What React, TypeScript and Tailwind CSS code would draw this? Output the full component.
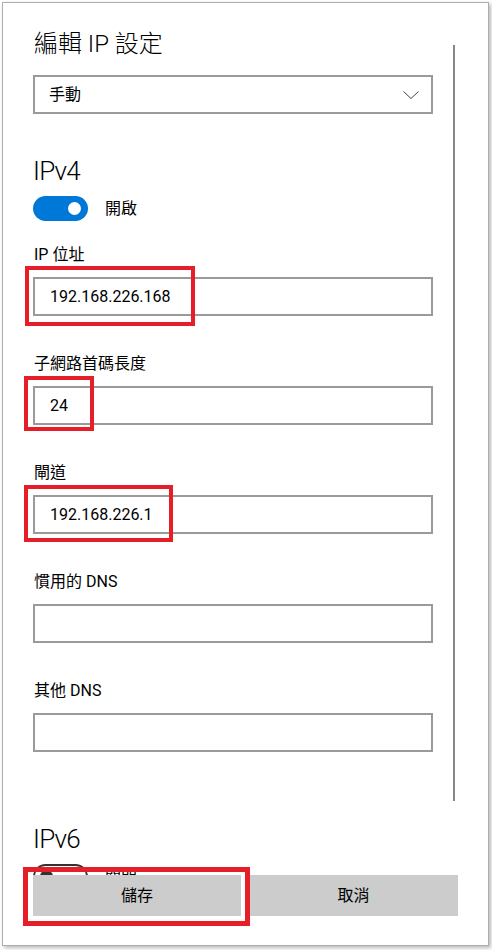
import React from 'react';

interface FieldProps {
  label: string;
  value?: string;
  mark?: string; // tailwind classes for the red annotation box
}

const Field: React.FC<FieldProps> = ({ label, value, mark }) => (
  <div className="mt-[36px] first:mt-0">
    <div className="h-[24px] leading-[24px] text-[16px] pl-px">{label}</div>
    <div className="relative mt-[10px]">
      <div className="h-[39px] w-[400px] border-2 border-[#9a9a9a] bg-white pl-[15px] flex items-center text-[16px]">
        {value}
      </div>
      {mark && <div className={`absolute border-[4px] border-[#e61e28] ${mark}`} />}
    </div>
  </div>
);

const Toggle = ({ on }: { on: boolean }) =>
  on ? (
    <div className="w-[55px] h-[25px] rounded-full bg-[#0078d7] flex items-center justify-end pr-[7px]">
      <div className="w-[13px] h-[13px] rounded-full bg-white" />
    </div>
  ) : (
    <div className="w-[55px] h-[25px] rounded-full border-2 border-[#333] flex items-center pl-[5px]">
      <div className="w-[13px] h-[13px] rounded-full bg-[#333]" />
    </div>
  );

export default function App() {
  return (
    <div className="w-[492px] h-[950px] bg-white pt-[2px] pl-[2px] text-black font-['Roboto','Noto_Sans_CJK_TC',sans-serif]">
      <div className="relative w-[487px] h-[944px] border border-[#adadad] bg-white shadow-[2px_2px_4px_rgba(0,0,0,0.28)] flex flex-col">
        {/* scrolling content */}
        <div className="h-[872px] overflow-hidden pl-[30px] pt-[25px]">
          <div className="h-[32px] leading-[32px] text-[24px] font-light pl-px">編輯 IP 設定</div>

          <div className="mt-[15px] h-[39px] w-[400px] border-2 border-[#9a9a9a] pl-[14px] pr-[12px] flex items-center justify-between text-[16px]">
            <span>手動</span>
            <svg width="16" height="8" viewBox="0 0 16 8" fill="none">
              <path d="M0.5 0.5 L8 7.5 L15.5 0.5" stroke="#444" strokeWidth="1" />
            </svg>
          </div>

          <div className="mt-[41px] h-[32px] leading-[32px] text-[26px] font-light tracking-[-0.8px]">IPv4</div>
          <div className="mt-[9px] flex items-center gap-[17px]">
            <Toggle on />
            <span className="text-[16px]">開啟</span>
          </div>

          <div className="mt-[22px]">
            <Field label="IP 位址" value="192.168.226.168" mark="-left-[8px] -top-[11px] w-[170px] h-[60px]" />
            <Field label="子網路首碼長度" value="24" mark="-left-[9px] -top-[10px] w-[70px] h-[55px]" />
            <Field label="閘道" value="192.168.226.1" mark="-left-[9px] -top-[10px] w-[149px] h-[57px]" />
            <Field label="慣用的 DNS" />
            <Field label="其他 DNS" />
          </div>

          <div className="mt-[71px] h-[32px] leading-[32px] text-[26px] font-light tracking-[-0.8px]">IPv6</div>
          <div className="mt-[9px] flex items-center gap-[17px]">
            <Toggle on={false} />
            <span className="text-[16px]">關閉</span>
          </div>
        </div>

        {/* footer buttons */}
        <div className="relative pl-[30px] flex gap-[8px]">
          <button className="w-[208px] h-[41px] bg-[#cccccc] text-[16px]">儲存</button>
          <button className="w-[209px] h-[41px] bg-[#cccccc] text-[16px]">取消</button>
          <div className="absolute left-[20px] -top-[8px] w-[227px] h-[59px] border-[5px] border-[#e61e28]" />
        </div>

        {/* scrollbar */}
        <div className="absolute left-[450px] top-[42px] w-[2px] h-[756px] bg-[#878787]" />
      </div>
    </div>
  );
}
